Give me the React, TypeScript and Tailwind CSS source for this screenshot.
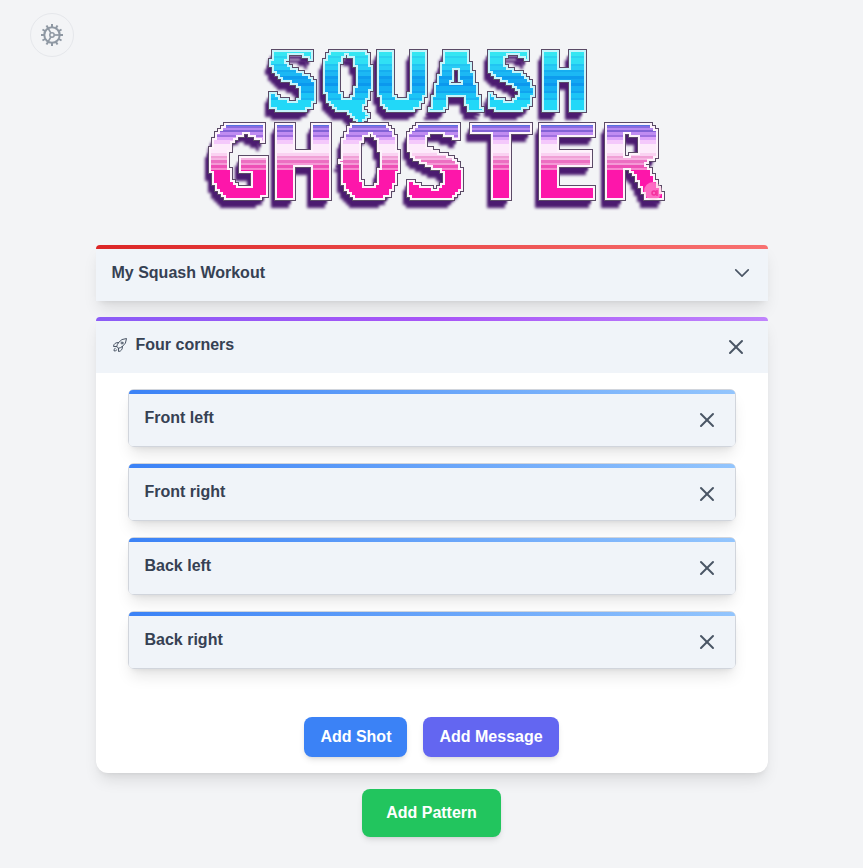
import { useState } from "react";
import { X } from "lucide-react";
import { HiOutlineChevronDown, HiOutlineRocketLaunch } from "react-icons/hi2";

type Band = [y: number, height: number, color: string];

const cyanBands: Band[] = [
  [0, 19, "#34e6f2"],
  [19, 2, "#2bd3f0"],
  [21, 6, "#30e0f4"],
  [27, 2, "#22c4f2"],
  [29, 4, "#28cdf5"],
  [33, 2, "#16adf0"],
  [35, 4, "#1cb8f4"],
  [39, 3, "#0e9cee"],
  [42, 4, "#12a8f2"],
  [46, 3, "#0b98ee"],
  [49, 5, "#15b0f3"],
  [54, 2, "#10a4f0"],
  [56, 5, "#1cc4f6"],
  [61, 2, "#18b6f2"],
  [63, 30, "#22d8f8"],
];

const pinkBands: Band[] = [
  [80, 9, "#5673e0"],
  [89, 2, "#8a6be0"],
  [91, 2, "#b98af0"],
  [93, 2, "#8362d6"],
  [95, 3, "#c08cf2"],
  [98, 2, "#a070e0"],
  [100, 3, "#dda4fa"],
  [103, 4, "#f4c8fb"],
  [107, 9, "#fdeafb"],
  [116, 3, "#fad2f2"],
  [119, 2, "#f0a0d6"],
  [121, 2, "#f6b4e2"],
  [123, 3, "#ec70c2"],
  [126, 2, "#f49ad6"],
  [128, 3, "#ee50b6"],
  [131, 2, "#f886ce"],
  [133, 30, "#fd16aa"],
];

type PixelFilterProps = { id: string; top: number; height: number; bands: Band[]; rim: string };

/* Snaps the lettering to 3px blocks, colours it in bands, then adds rim, outline and shadow. */
function PixelFilter({ id, top, height, bands, rim }: PixelFilterProps) {
  return (
    <filter id={id} filterUnits="userSpaceOnUse" primitiveUnits="userSpaceOnUse" x="0" y="0" width="479" height="185" colorInterpolationFilters="sRGB">
      <feOffset in="SourceAlpha" dx="-1" dy="0" result="left" />
      <feOffset in="SourceAlpha" dx="1" dy="0" result="right" />
      <feMerge result="bold">
        <feMergeNode in="left" />
        <feMergeNode in="right" />
      </feMerge>
      <feFlood x="1" y={top + 1} width="1" height="1" floodColor="#000" result="dot" />
      <feComposite in="dot" in2="dot" operator="over" x="0" y={top} width="3" height="3" result="cell" />
      <feTile in="cell" result="grid" />
      <feComposite in="bold" in2="grid" operator="in" x="0" y={top} width="479" height={height} result="samples" />
      <feComponentTransfer in="samples" result="hard">
        <feFuncA type="discrete" tableValues="0 1" />
      </feComponentTransfer>
      <feMorphology in="hard" operator="dilate" radius="1" x="0" y="0" width="479" height="185" result="blocks" />
      <feMorphology in="blocks" operator="erode" radius="1" result="face" />
      {bands.map(([y, bandHeight, color]) => (
        <feFlood key={y} x="0" y={y} width="479" height={bandHeight} floodColor={color} result={`band${y}`} />
      ))}
      <feMerge result="stripes">
        {bands.map(([y]) => (
          <feMergeNode key={y} in={`band${y}`} />
        ))}
      </feMerge>
      <feGaussianBlur in="stripes" stdDeviation="0 0.6" result="softStripes" />
      <feComposite in="softStripes" in2="face" operator="in" result="colored" />
      <feMorphology in="blocks" operator="dilate" radius="1" result="rimShape" />
      <feFlood floodColor={rim} result="rimColor" />
      <feComposite in="rimColor" in2="rimShape" operator="in" result="rimLayer" />
      <feMorphology in="blocks" operator="dilate" radius="2" result="lineShape" />
      <feFlood floodColor="#5a4a66" result="lineColor" />
      <feComposite in="lineColor" in2="lineShape" operator="in" result="lineLayer" />
      <feFlood floodColor="#4b1b70" result="shadeColor" />
      <feComposite in="shadeColor" in2="blocks" operator="in" result="shade" />
      <feOffset in="shade" dx="-3" dy="5" result="shadeNear" />
      <feGaussianBlur in="shadeNear" stdDeviation="1" result="near" />
      <feOffset in="shade" dx="-5" dy="9" result="shadeFar" />
      <feGaussianBlur in="shadeFar" stdDeviation="1.6" result="far" />
      <feMerge>
        <feMergeNode in="far" />
        <feMergeNode in="near" />
        <feMergeNode in="lineLayer" />
        <feMergeNode in="rimLayer" />
        <feMergeNode in="colored" />
      </feMerge>
    </filter>
  );
}

function Logo() {
  return (
    <svg
      viewBox="0 0 479 180"
      className="w-full max-w-[479px] overflow-visible font-['DejaVu_Sans_Mono','Liberation_Mono',monospace] font-bold"
      role="img"
      aria-label="Squash Ghoster"
      textAnchor="middle"
    >
      <defs>
        <PixelFilter id="cyan" top={14} height={72} bands={cyanBands} rim="#c5f5fb" />
        <PixelFilter id="pink" top={87} height={75} bands={pinkBands} rim="#fdf3fb" />
      </defs>
      <text x="237" y="74" fontSize="90" filter="url(#cyan)">SQUASH</text>
      <text x="243" y="163" fontSize="109" filter="url(#pink)">GHOSTER</text>
      <circle cx="461" cy="154" r="9" fill="#ffc0dc" fillOpacity="0.5" />
      <circle cx="462" cy="156" r="2" fill="none" stroke="#f52f9c" strokeWidth="1.5" />
      <path d="M465 153v6" stroke="#f52f9c" strokeWidth="1.5" />
    </svg>
  );
}

const teeth = [0, 30, 60, 90, 120, 150, 180, 210, 240, 270, 300, 330];

function GearIcon() {
  return (
    <svg viewBox="0 0 24 24" width="24" height="24" fill="none" stroke="currentColor" strokeWidth="2" aria-hidden="true">
      <circle cx="12" cy="12" r="7.7" />
      <circle cx="12" cy="12" r="2.2" strokeWidth="1.5" />
      {[0, 120, 240].map((angle) => (
        <path key={angle} d="M14.4 12H20" strokeWidth="1.7" transform={`rotate(${angle} 12 12)`} />
      ))}
      {teeth.map((angle) => (
        <path key={angle} d="M20 12h3" transform={`rotate(${angle} 12 12)`} />
      ))}
    </svg>
  );
}

function RemoveButton({ label, onClick }: { label: string; onClick: () => void }) {
  return (
    <button type="button" aria-label={label} onClick={onClick} className="flex size-8 items-center justify-center text-gray-600">
      <X size={24} strokeWidth={2} />
    </button>
  );
}

function Shot({ name, onRemove }: { name: string; onRemove: () => void }) {
  return (
    <li className="rounded-md border border-gray-300 shadow-lg">
      <div className="h-1 rounded-t bg-linear-to-r/srgb from-[#3b82f6] to-[#93c5fd]" />
      <div className="flex h-13 items-center justify-between rounded-b bg-[#f0f4f9] pr-3 pl-4">
        <h3 className="pb-1 font-bold">{name}</h3>
        <RemoveButton label={`Remove ${name}`} onClick={onRemove} />
      </div>
    </li>
  );
}

export default function App() {
  const [shots, setShots] = useState(["Front left", "Front right", "Back left", "Back right"]);
  const [patternVisible, setPatternVisible] = useState(true);

  return (
    <div className="min-h-screen bg-gray-100 pb-8 font-['Liberation_Sans',Arial,sans-serif] text-base text-gray-700">
      <header className="grid grid-cols-1 justify-items-center">
        <button
          type="button"
          aria-label="Settings"
          className="col-start-1 row-start-1 mt-[13px] ml-[30px] flex size-11 items-center justify-center self-start justify-self-start rounded-full border border-gray-200 text-[#8f98a3]"
        >
          <GearIcon />
        </button>
        <h1 className="col-start-1 row-start-1 mt-[37px] flex w-full max-w-[479px] justify-center">
          <Logo />
        </h1>
      </header>

      <main className="mx-auto mt-7 flex max-w-2xl flex-col gap-4">
        <section className="shadow-lg">
          <div className="h-1 rounded-t bg-linear-to-r/srgb from-[#dc2626] to-[#f87171]" />
          <div className="flex h-13 items-center justify-between bg-[#f0f4f9] pr-4 pl-4">
            <h2 className="pb-1 font-bold">My Squash Workout</h2>
            <button type="button" aria-label="Expand workout" className="pb-1 text-gray-600">
              <HiOutlineChevronDown size={20} strokeWidth={2} />
            </button>
          </div>
        </section>

        {patternVisible && (
          <section className="rounded-t rounded-b-xl bg-white shadow-lg">
            <div className="h-1 rounded-t bg-linear-to-r/srgb from-[#8b5cf6] via-[#a855f7] to-[#c084fc]" />
            <div className="flex h-13 items-center justify-between bg-[#f0f4f9] px-4">
              <h2 className="flex items-center gap-2 pb-1 font-bold">
                <HiOutlineRocketLaunch size={16} className="text-gray-600" />
                Four corners
              </h2>
              <RemoveButton label="Remove Four corners" onClick={() => setPatternVisible(false)} />
            </div>
            <ul className="flex flex-col gap-4 px-8 pt-4">
              {shots.map((shot, index) => (
                <Shot key={index} name={shot} onRemove={() => setShots(shots.filter((_, i) => i !== index))} />
              ))}
            </ul>
            <div className="mt-12 flex justify-center gap-4 pb-4 font-bold text-white">
              <button type="button" onClick={() => setShots([...shots, "Front left"])} className="rounded-lg bg-[#3b82f6] px-4 py-2 shadow-md">
                Add Shot
              </button>
              <button type="button" className="rounded-lg bg-[#6366f1] px-4 py-2 shadow-md">
                Add Message
              </button>
            </div>
          </section>
        )}

        <button type="button" className="self-center rounded-lg bg-[#22c55e] px-6 py-3 font-bold text-white shadow-md">
          Add Pattern
        </button>
      </main>
    </div>
  );
}
